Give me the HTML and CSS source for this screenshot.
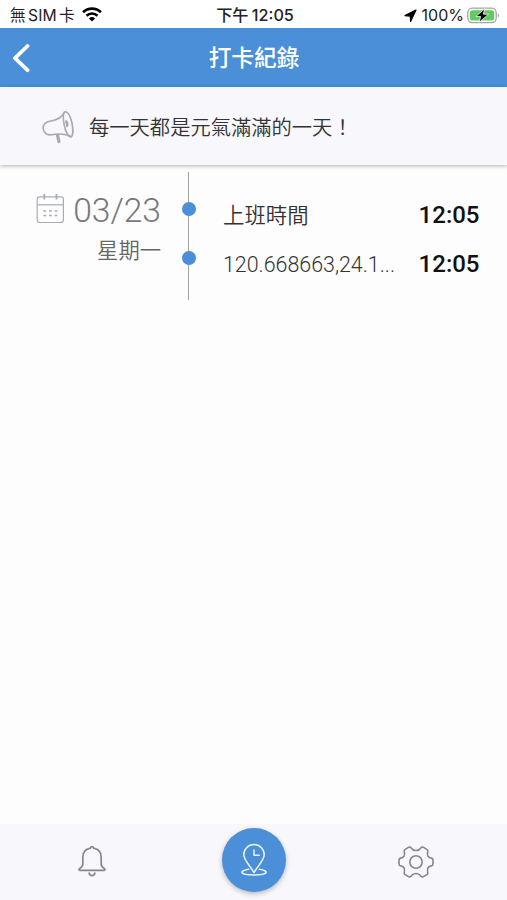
FILE: index.html
```html
<!DOCTYPE html>
<html lang="zh-Hant">
<head>
    <meta charset="UTF-8">
    <meta name="viewport" content="width=device-width, initial-scale=1.0">
    <title>打卡紀錄</title>
    <link rel="stylesheet" href="styles.css">
</head>
<body>
    <!-- Status bar -->
    <div class="status-bar">
        <div class="status-left">
            <span class="carrier">無 SIM 卡</span>
            <svg class="wifi" width="20" height="15" viewBox="0 0 20 15">
                <path d="M10 14.6 6.9 11.4a4.5 4.5 0 0 1 6.2 0z" fill="#000"/>
                <path d="M4.5 8.7a8 8 0 0 1 11 0M1.1 5.2a12.9 12.9 0 0 1 17.8 0" fill="none" stroke="#000" stroke-width="2.6"/>
            </svg>
        </div>
        <div class="status-time">下午 12:05</div>
        <div class="status-right">
            <svg width="13" height="13" viewBox="0 0 13 13">
                <path d="M12 1 1 6.6l5.3.5.3 5.4z" fill="#000" stroke="#000" stroke-width="1.2" stroke-linejoin="round"/>
            </svg>
            <span class="percent">100%</span>
            <svg class="battery" width="33" height="17" viewBox="0 0 33 17">
                <rect x=".8" y="1.2" width="28.4" height="14.4" rx="4.5" fill="#fff" stroke="#a5a5a5" stroke-width="1.3"/>
                <rect x="2.8" y="3.2" width="24.4" height="10.4" rx="2.8" fill="#63ca62"/>
                <path d="M30.8 6.2c1.6.6 1.6 3.8 0 4.4z" fill="#a5a5a5"/>
                <path d="M17.8 1.6 8.8 9.6h4.9l-1.7 5.8 9.6-8.2h-5.3z" fill="#000" stroke="#fff" stroke-width=".8"/>
            </svg>
        </div>
    </div>

    <!-- Header -->
    <header class="header">
        <svg class="back" width="20" height="30" viewBox="0 0 20 30">
            <path d="M17.5 3 5 15.2l12.5 12" fill="none" stroke="#fff" stroke-width="3.8" stroke-linecap="round" stroke-linejoin="round"/>
        </svg>
        <h1 class="title">打卡紀錄</h1>
    </header>

    <!-- Announcement -->
    <div class="notice">
        <svg class="horn" width="34" height="36" viewBox="0 0 34 36">
            <g fill="none" stroke="#aaaaad" stroke-width="1.6" stroke-linecap="round" stroke-linejoin="round">
                <path d="M22.5 2.2C20 7.8 15 10.3 7.8 11.2 3.2 12 .5 15.3 1.4 19.4c1 4.4 4 5.9 8 5.3 7-1.1 14.3-1.2 19.8 2.1"/>
                <path d="M22.5 2.2c2.8-2.1 6.3 4.3 7.5 10.8 1.2 6.4 1.2 13.2-1.2 13.8-2.5.6-5.5-5.5-6.7-12.2-1-6-.9-11.2.4-12.4z"/>
                <path d="M24 11c1.8 0 2.4 4.2.8 5.5z" fill="#aaaaad"/>
                <path d="m14.6 24.8 1.7 7.6 1.5-.4-1.5-7.4" fill="#aaaaad"/>
            </g>
        </svg>
        <p class="notice-text">每一天都是元氣滿滿的一天！</p>
    </div>

    <!-- Clock-in records -->
    <main class="records">
        <div class="day">
            <div class="date">
                <svg class="calendar" width="29" height="31" viewBox="0 0 29 31">
                    <g fill="none" stroke="#a9adb2" stroke-width="1.2">
                        <rect x="1.2" y="3.8" width="26.2" height="25.7" rx="2.5"/>
                        <path d="M1.2 11.8h26.2"/>
                        <path d="M8.3 1v5.6M20.5 1v5.6" stroke-width="1.8"/>
                        <path d="M7.4 18h2.8M13 18h2.8M18.6 18h2.8M7.4 22.5h2.8M13 22.5h2.8M18.6 22.5h2.8" stroke-width="1.3"/>
                    </g>
                </svg>
                <span>03/23</span>
            </div>
            <div class="weekday">星期一</div>
        </div>
        <div class="timeline">
            <span class="dot"></span>
            <span class="dot"></span>
        </div>
        <div class="entries">
            <div class="entry">
                <span class="label">上班時間</span>
                <span class="time">12:05</span>
            </div>
            <div class="entry">
                <span class="label">120.668663,24.1...</span>
                <span class="time">12:05</span>
            </div>
        </div>
    </main>

    <!-- Bottom tabs -->
    <nav class="tabs">
        <a class="tab">
            <svg width="30" height="34" viewBox="0 0 30 34">
                <g fill="none" stroke="#85868c" stroke-width="1.7" stroke-linecap="round" stroke-linejoin="round">
                    <path d="M13.4 3.2c0-2.2 3.2-2.2 3.2 0 4.5.8 7.6 4.2 7.6 9v6.6c0 2.3 1 3.5 3 4.6 1.2.8 1 2-.2 2H3c-1.2 0-1.4-1.2-.2-2 2-1.1 3-2.3 3-4.6v-6.6c0-4.8 3.1-8.2 7.6-9z"/>
                    <path d="M12.2 28.2c.4 3.2 5.2 3.2 5.6 0"/>
                </g>
            </svg>
        </a>
        <a class="tab">
            <span class="punch">
                <svg width="28" height="34" viewBox="0 0 28 34">
                    <g fill="none" stroke="#e9f4ff" stroke-width="1.5" stroke-linecap="round" stroke-linejoin="round">
                        <path d="M14 29.5C10 23 3.8 17 3.8 11.8a10.2 10.2 0 0 1 20.4 0C24.2 17 18 23 14 29.5z"/>
                        <path d="M14 7v5.3h5.2"/>
                        <path d="M8.6 26.3C-.8 27.6-1.4 32 14 32s14.8-4.4 5.4-5.7"/>
                    </g>
                </svg>
            </span>
        </a>
        <a class="tab">
            <svg width="36" height="34" viewBox="0 0 36 34">
                <g fill="none" stroke="#85868c" stroke-width="1.6" stroke-linejoin="round">
                    <path d="M10 2.6q2.2-1.4 3.4.6c2 3.1 7.2 3.1 9.2 0q1.2-2 3.4-.6l2.8 1.8q1.5 1 .9 2.7c-1.1 3.4.8 5.7 3.7 6q1.6.2 1.6 1.8v4.2q0 1.6-1.6 1.8c-2.9.3-4.8 2.6-3.7 6q.6 1.7-.9 2.7L26 31.4q-2.2 1.4-3.4-.6c-2-3.1-7.2-3.1-9.2 0q-1.2 2-3.4.6l-2.8-1.8q-1.5-1-.9-2.7c1.1-3.4-.8-5.7-3.7-6Q1 20.7 1 19.1v-4.2q0-1.6 1.6-1.8c2.9-.3 4.8-2.6 3.7-6q-.6-1.7.9-2.7z"/>
                    <circle cx="18" cy="17" r="6.2"/>
                </g>
            </svg>
        </a>
    </nav>
</body>
</html>
```
FILE: styles.css
```css
* {
    box-sizing: border-box;
}

body {
    margin: 0;
    height: 100vh;
    display: flex;
    flex-direction: column;
    overflow: hidden;
    background: #fdfdfd;
    color: #333;
    font-family: Roboto, "Noto Sans CJK TC", sans-serif;
}

/* Status bar */
.status-bar {
    height: 28px;
    display: grid;
    grid-template-columns: 1fr auto 1fr;
    align-items: center;
    padding: 2px 7px 0 10px;
    background: #fff;
    color: #222;
    font-family: Inter, "Noto Sans CJK TC", sans-serif;
    font-size: 16px;
    line-height: 24px;
    white-space: nowrap;
}

.status-left,
.status-right {
    display: flex;
    align-items: center;
}

.status-right {
    justify-content: flex-end;
}

.carrier {
    padding-top: 1px;
    font-size: 15.7px;
    word-spacing: -2px;
}

.wifi {
    margin: 0 0 2px 7px;
}

.status-time {
    font-weight: 500;
    font-size: 16.2px;
    word-spacing: -1px;
}

.percent {
    margin: 0 3px 0 5px;
}

/* Header */
.header {
    height: 59px;
    display: grid;
    grid-template-columns: 40px 1fr 40px;
    align-items: center;
    background: #4a8fd8;
}

.back {
    margin-left: 10px;
}

.title {
    margin: 0;
    padding: 2px 0 0 1px;
    color: #fff;
    font-size: 22.7px;
    font-weight: 500;
    line-height: 34px;
    text-align: center;
}

/* Announcement */
.notice {
    height: 78px;
    display: flex;
    align-items: center;
    padding: 3px 0 0 42px;
    background: #f7f7fc;
    box-shadow: 0 1px 4px rgba(0, 0, 0, 0.3);
}

.notice-text {
    margin: 0 0 0 13px;
    font-size: 20.3px;
    font-weight: 350;
    line-height: 30px;
}

/* Records */
.records {
    flex: 1;
    display: grid;
    grid-template-columns: 161px 55px 1fr;
    align-items: start;
    padding-top: 7px;
}

.day {
    padding-top: 17px;
    text-align: right;
    font-weight: 300;
}

.date {
    display: flex;
    justify-content: flex-end;
    align-items: center;
    gap: 8px;
    height: 42px;
    color: #77787c;
    font-size: 33.6px;
}

.calendar {
    margin-bottom: 3px;
}

.weekday {
    padding-top: 2px;
    color: #666;
    font-size: 21.3px;
    font-weight: 350;
    line-height: 36px;
}

.timeline {
    height: 128px;
    display: flex;
    flex-direction: column;
    align-items: center;
    gap: 35px;
    padding-top: 30px;
    background: linear-gradient(#a2a2a2, #a2a2a2) center / 1px 100% no-repeat;
}

.dot {
    width: 14px;
    height: 14px;
    border-radius: 50%;
    background: #4a8fd8;
}

.entries {
    padding: 18px 27.5px 0 7px;
}

.entry {
    height: 49px;
    display: flex;
    justify-content: space-between;
    align-items: center;
}

.label {
    padding-top: 2px;
    font-size: 21.4px;
    font-weight: 350;
    line-height: 30px;
    white-space: nowrap;
}

.time {
    color: #111;
    font-size: 24px;
    font-weight: 500;
}

/* Bottom tabs */
.tabs {
    height: 76px;
    display: grid;
    grid-template-columns: repeat(3, 162px);
    justify-content: center;
    align-items: center;
    background: #f7f7fc;
}

.tab {
    display: flex;
    justify-content: center;
}

.punch {
    width: 64px;
    height: 64px;
    display: flex;
    justify-content: center;
    align-items: center;
    margin-bottom: 4px;
    border-radius: 50%;
    background: #4a8fd8;
    box-shadow: 0 2px 5px rgba(0, 0, 0, 0.25);
}
```
